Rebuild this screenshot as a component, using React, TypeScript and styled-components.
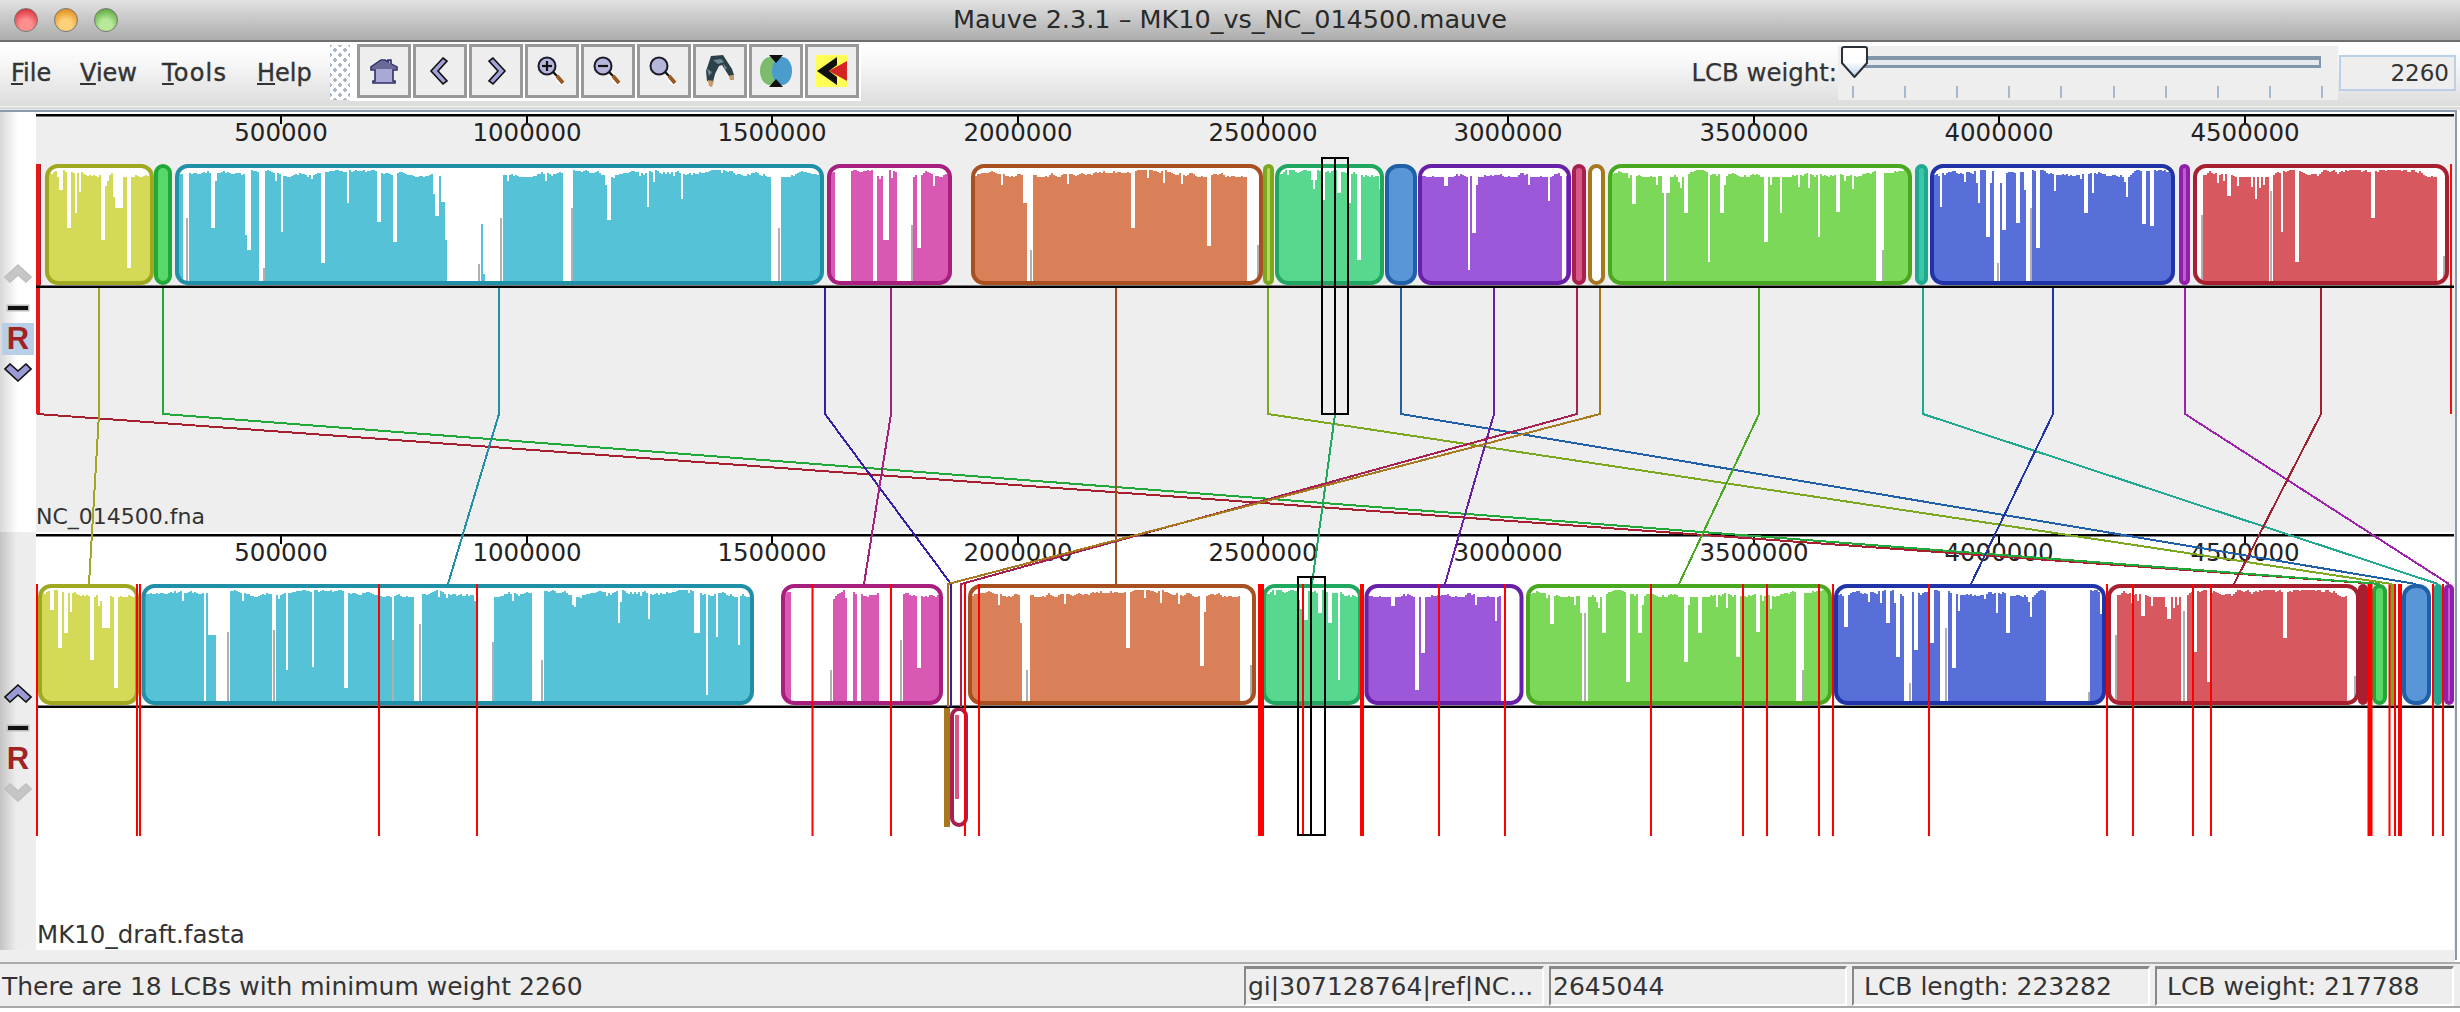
import React from "react";
import styled, { createGlobalStyle } from "styled-components";

const Global = createGlobalStyle`
  html, body { margin: 0; padding: 0; background: #fff; overflow: hidden; }
  body { font-family: "DejaVu Sans", sans-serif; }
`;

const UI = `"DejaVu Sans", "Liberation Sans", sans-serif`;

const Window = styled.div`
  width: 2460px; height: 1012px; display: flex; flex-direction: column; background: #fff; overflow: hidden;
`;
const TitleBar = styled.header`
  height: 40px; flex: none; display: flex; align-items: center; justify-content: center; position: relative;
  background: linear-gradient(#e2e2e2, #c9c9c9 45%, #adadad);
  border-bottom: 2px solid #6e6e6e;
`;
const Lights = styled.div`
  position: absolute; left: 14px; top: 8px; display: flex; gap: 16px;
`;
const Light = styled.span<{ $c: string; $d: string }>`
  width: 24px; height: 24px; border-radius: 50%; border: 1px solid #777; box-sizing: border-box;
  background: radial-gradient(circle at 50% 75%, ${(p) => p.$c} 30%, ${(p) => p.$d} 85%);
`;
const Title = styled.h1`
  margin: 0; font: 400 25.5px ${UI}; color: #2a2a2a; transform: translate(0, -1px);
`;
const Toolbar = styled.div`
  height: 64px; flex: none; display: flex; align-items: flex-start;
  background: linear-gradient(#fff, #f8f8f8 30%, #dcdcdc);
`;
const Menu = styled.nav`
  width: 330px; flex: none; height: 100%; display: flex; align-items: center; padding: 0 0 3px 11px; box-sizing: border-box;
`;
const MenuItem = styled.span<{ $w: number; $sp: number }>`
  width: ${(p) => p.$w}px; flex: none; font: 400 24px ${UI}; letter-spacing: ${(p) => p.$sp}px; color: #333; -webkit-text-stroke: 0.4px #333;
  &::first-letter { text-decoration: underline; }
`;
const Grip = styled.div`
  width: 20px; height: 55px; margin-top: 3px; flex: none;
  background-color: #fff;
  background-image: radial-gradient(circle, #aab6c6 1.6px, transparent 2px), radial-gradient(circle, #aab6c6 1.6px, transparent 2px);
  background-size: 10px 10px; background-position: 0 0, 5px 5px;
`;
const ButtonBar = styled.div`
  display: flex; gap: 2px; padding: 2px 2px 3px 7px; background: #fff;
`;
const ToolButton = styled.button`
  width: 54px; height: 54px; padding: 0; border: 3px solid #999; background: #eee; box-sizing: border-box;
  display: flex; align-items: center; justify-content: center;
`;
const WeightBox = styled.div`
  margin-left: auto; display: flex; align-items: flex-start; padding-right: 4px;
`;
const WeightLabel = styled.label`
  font: 400 24.4px ${UI}; color: #333; margin-top: 16px; margin-right: 1px; -webkit-text-stroke: 0.25px #333;
`;
const Slider = styled.div`
  width: 500px; height: 54px; margin-top: 4px; background: #eee; position: relative; flex: none;
`;
const Track = styled.div`
  position: absolute; left: 14px; top: 10px; width: 469px; height: 12px; box-sizing: border-box;
  border-top: 4px solid #8296aa; border-bottom: 3px solid #8296aa; border-right: 2px solid #8296aa; background: #e4e9ee;
`;
const Thumb = styled.svg`
  position: absolute; left: 2px; top: 0;
`;
const Ticks = styled.div`
  position: absolute; left: 14px; top: 40px; width: 471px; height: 12px; display: flex; justify-content: space-between;
`;
const Tick = styled.i`
  width: 2px; height: 12px; background: #a2b9d0;
`;
const WeightField = styled.div`
  width: 117px; height: 36px; margin-top: 13px; margin-left: 1px; box-sizing: border-box; border: 2px solid #b9d0e6;
  background: #eee; font: 400 23px ${UI}; color: #333; text-align: right; padding: 2px 5px 0 0; line-height: 28px;
`;
const ToolSep = styled.div`
  height: 4px; flex: none; background: linear-gradient(#fff, #d8d8d8 40%, #d8d8d8 70%, #eee);
`;
const Alignment = styled.main`
  flex: none; height: 850px; margin-right: 3px; position: relative; display: flex; flex-direction: column;
  border-top: 2px solid #8a9aaa; border-right: 2px solid #8a9aaa; border-bottom: 2px solid #7f8f9f; background: #eee; box-sizing: border-box;
`;
const GenomeRow = styled.section<{ $h: number }>`
  height: ${(p) => p.$h}px; flex: none; display: flex;
`;
const Gutter = styled.aside<{ $sel?: boolean }>`
  width: 36px; flex: none; position: relative;
  background: ${(p) => (p.$sel ? "linear-gradient(90deg,#c4c4c4,#ececec 45%,#eee)" : "linear-gradient(90deg,#d8d8d8,#fff 50%)")};
  display: flex; flex-direction: column; align-items: center; padding-top: 152px; box-sizing: border-box;
`;
const Minus = styled.i`
  width: 20px; height: 4px; background: #111; margin-top: 23px; box-shadow: 0 0 0 1.5px #bbb;
`;
const Reverse = styled.span<{ $on?: boolean }>`
  width: 32px; height: 32px; margin-top: 13px; display: flex; align-items: center; justify-content: center;
  font: 700 31px "Liberation Sans", sans-serif; color: #a02424; line-height: 32px;
  background: ${(p) => (p.$on ? "#b9cfe5" : "transparent")};
`;
const ArrowSlot = styled.div`
  flex: none; margin-top: 8px; height: 19px;
`;
const Chart = styled.svg<{ $bg: string }>`
  flex: none; display: block; background: ${(p) => p.$bg};
`;
const Overlay = styled.svg`
  position: absolute; left: 0; top: 0; pointer-events: none;
`;
const TickText = styled.text`
  font: 400 24.5px ${UI}; fill: #222; text-anchor: middle;
`;
const NameText = styled.text<{ $size: number }>`
  font: 400 ${(p) => p.$size}px ${UI}; fill: #333;
`;
const LowerBand = styled.div`
  height: 12px; flex: none; background: #eee;
`;
const StatusBar = styled.footer`
  flex: none; height: 46px; box-sizing: border-box; margin-top: 2px; border-top: 2px solid #aaa; border-bottom: 2px solid #aaa;
  background: #eee; display: flex; gap: 5px; padding: 2px 6px 0 2px;
`;
const StatusText = styled.div`
  flex: 1; font: 400 25px ${UI}; color: #333; line-height: 41px; white-space: nowrap;
`;
const StatusCell = styled.div<{ $w: number }>`
  width: ${(p) => p.$w}px; flex: none; box-sizing: border-box; border-top: 3px solid #888; border-left: 2px solid #888;
  border-right: 2px solid #fff; border-bottom: 2px solid #fff; font: 400 25px ${UI}; color: #333; line-height: 36px;
  padding-left: 2px; white-space: nowrap; overflow: hidden;
`;

const HouseIcon = () => (
  <svg width="32" height="32" viewBox="0 0 32 32">
    <path d="M3 12L13 5H17L20 7V5H23V9L29 12V15H25V26H27V28H5V26H7V15H3z" fill="#a9a9d6" stroke="#2f2f66" strokeWidth="1.6" />
    <path d="M4 12L13 6H17L28 12V14H4z" fill="#6a6a98" />
  </svg>
);
const LeftIcon = () => (
  <svg width="32" height="32" viewBox="0 0 32 32">
    <path d="M19 3l4 3-9 10 9 10-4 3L7 16z" fill="#a3a3dc" stroke="#111" strokeWidth="1.6" />
  </svg>
);
const RightIcon = () => (
  <svg width="32" height="32" viewBox="0 0 32 32">
    <path d="M13 3l-4 3 9 10-9 10 4 3 12-13z" fill="#a3a3dc" stroke="#111" strokeWidth="1.6" />
  </svg>
);
const LensIcon = ({ mark }: { mark?: "+" | "-" }) => (
  <svg width="32" height="32" viewBox="0 0 32 32">
    <path d="M18 19l9 10" stroke="#fff" strokeWidth="6" />
    <circle cx="11" cy="11" r="8.5" fill="#b6b6dc" stroke="#1a1a2a" strokeWidth="2" />
    <path d="M17 17l4 4" stroke="#111" strokeWidth="2.4" />
    <path d="M21 21l6 7" stroke="#9a5a22" strokeWidth="4" />
    {mark && <path d="M6 11h10" stroke="#111" strokeWidth="2.2" />}
    {mark === "+" && <path d="M11 6v10" stroke="#111" strokeWidth="2.2" />}
  </svg>
);
const BinocularIcon = () => (
  <svg width="34" height="34" viewBox="0 0 34 34">
    <path d="M8 2l12-1 9 14 2 6-5 1-7-11-3 1-4 8-2 8-6-1-1-10z" fill="#2c4048" />
    <path d="M10 6l8-1 3 3-6 2zM4 15l5 3-3 4zM20 9l4 5-2 2z" fill="#6f8a96" />
    <path d="M5 26l6 1-2 6-3-1zM26 22l5-1 0 5-4 0z" fill="#c59a6c" />
  </svg>
);
const ColorIcon = () => (
  <svg width="34" height="34" viewBox="0 0 34 34">
    <ellipse cx="11" cy="17" rx="10" ry="14" fill="#7cbc6c" />
    <ellipse cx="23" cy="17" rx="10" ry="14" fill="#4a9ccc" />
    <path d="M10 1h14l-7 8zM10 33h14l-7-8z" fill="#111" />
  </svg>
);
const ArrowsIcon = () => (
  <svg width="34" height="34" viewBox="0 0 34 34">
    <path d="M1 1h32v32H1z" fill="#ffff55" />
    <path d="M14 17L32 7v20z" fill="#d42424" />
    <path d="M2 17L22 3v8l-8 6 8 6v8z" fill="#111" />
  </svg>
);
const Chevron = ({ up, on }: { up: boolean; on: boolean }) => (
  <svg width="28" height="19" viewBox="0 0 28 19">
    <path
      d={up ? "M14 1L27 13l-5 5-8-7-8 7-5-5z" : "M14 18L27 6 22 1 14 8 6 1 1 6z"}
      fill={on ? "#9a9ad6" : "#c6c6c6"}
      stroke={on ? "#111" : "#c0c0c0"}
      strokeWidth="1.6"
    />
  </svg>
);

type Gap = [number, number, number, number?];
interface Block {
  id: string; fill: string; line: string; a: [number, number]; b: [number, number];
  solid?: boolean; gaps?: Gap[]; only1?: Gap[]; only2?: Gap[]; low?: boolean;
}

const BLOCKS: Block[] = [
  { id: "red0", fill: "#a82030", line: "#a82030", a: [36, 41], b: [2358, 2368], solid: true },
  { id: "yel", fill: "#d4d958", line: "#a0a820", a: [45, 154], b: [38, 139],
    gaps: [[60, 62, 190], [68, 70, 228], [75, 77, 213], [80, 81, 192], [102, 104, 240], [115, 122, 208], [128, 130, 268]] },
  { id: "grn", fill: "#58d868", line: "#20a838", a: [154, 172], b: [2372, 2387], solid: true },
  { id: "cya", fill: "#56c2d8", line: "#2090a8", a: [175, 824], b: [141.5, 754],
    only1: [[183, 188, 282, 218], [212, 214, 228], [245, 248, 235], [248, 250, 250], [260, 265, 282, 268], [281, 283, 232], [322, 325, 263], [347, 349, 203], [378, 380, 222], [393, 397, 242],
      [434, 436, 194], [436, 438, 216], [442, 444, 202], [446, 448, 240], [448, 480, 282, 264], [482, 484, 224], [484, 486, 274], [486, 502, 282, 218],
      [563, 573, 282, 208], [608, 610, 220], [647, 649, 207], [772, 780, 282, 228]],
    only2: [[204, 206, 282], [208, 217, 215], [217, 229, 282, 212], [272, 275, 282, 210], [286, 288, 250], [312, 314, 247], [345, 347, 268], [392, 394, 282, 220], [414, 421, 282, 204], [478, 494, 282, 222], [532, 543, 282, 240], [618, 620, 203], [694, 700, 213], [706, 708, 275], [716, 718, 217], [738, 740, 225]] },
  { id: "mag", fill: "#d858b4", line: "#a8207f", a: [827, 952], b: [781, 943],
    only1: [[835, 851, 282], [873, 876, 282], [884, 888, 240], [897, 913, 282, 225], [918, 920, 248]],
    only2: [[791, 832, 282, 250], [848, 853, 282], [858, 860, 282], [880, 902, 282, 220], [918, 920, 248]] },
  { id: "org", fill: "#d98058", line: "#a85020", a: [971, 1263], b: [968, 1256],
    gaps: [[1024, 1033, 203], [1027, 1032, 282, 250], [1132, 1134, 228], [1208, 1210, 246], [1248, 1259, 282, 245]] },
  { id: "oli", fill: "#b8d858", line: "#7ca820", a: [1263, 1274], b: [2390, 2394], solid: true },
  { id: "min", fill: "#58d88e", line: "#20a860", a: [1275, 1384], b: [1262, 1362],
    gaps: [[1322, 1324, 200], [1338, 1340, 193], [1349, 1351, 203], [1358, 1360, 260]] },
  { id: "blu", fill: "#5896d8", line: "#2060a8", a: [1385, 1417], b: [2402, 2431], solid: true },
  { id: "pur", fill: "#9c58d8", line: "#6820a8", a: [1418, 1571], b: [1364.5, 1523.5],
    gaps: [[1445, 1447, 186], [1468, 1470, 270], [1473, 1475, 233]], only2: [[1502, 1521, 282]], only1: [[1562, 1566, 282]] },
  { id: "cri", fill: "#d85888", line: "#a82050", a: [1572, 1586], b: [950, 968], low: true, solid: true },
  { id: "bro", fill: "#d8b058", line: "#a87820", a: [1588, 1605], b: [944, 950], low: true },
  { id: "lim", fill: "#7cd858", line: "#48a820", a: [1608, 1912], b: [1526, 1832],
    gaps: [[1633, 1635, 204], [1663, 1669, 193], [1665, 1668, 282, 193], [1685, 1687, 213], [1708, 1710, 262], [1721, 1723, 213], [1765, 1767, 242], [1780, 1782, 213], [1818, 1820, 237], [1837, 1839, 212], [1877, 1884, 282, 250]] },
  { id: "tea", fill: "#38c8a8", line: "#20a890", a: [1915, 1928], b: [2434, 2442], solid: true },
  { id: "ind", fill: "#586ed8", line: "#2034a8", a: [1930, 2175], b: [1834, 2106],
    gaps: [[1940, 1942, 207], [1978, 1980, 203], [1987, 1989, 237], [1994, 1999, 282, 263], [2003, 2005, 230], [2017, 2019, 223], [2027, 2032, 282, 208], [2037, 2039, 248], [2085, 2087, 213], [2143, 2145, 224], [2151, 2153, 226]],
    only2: [[2046, 2090, 282, 272]] },
  { id: "vio", fill: "#c458d8", line: "#9020a8", a: [2179, 2190], b: [2444, 2454], solid: true },
  { id: "rdd", fill: "#d85860", line: "#a82030", a: [2193, 2449], b: [2107, 2360],
    gaps: [[2198, 2203, 282, 215], [2228, 2230, 196], [2255, 2257, 199], [2269, 2272, 282, 191], [2281, 2283, 232], [2296, 2298, 262], [2372, 2374, 218], [2437, 2445, 282, 256]] },
];

function rng(seed: number) {
  let s = seed * 9301 + 49297;
  return () => {
    s = (s * 9301 + 49297) % 233280;
    return s / 233280;
  };
}

function histogram(b: Block, genome: 0 | 1): string {
  const [x0, x1] = genome === 0 ? b.a : b.b;
  const [a0, a1] = b.a;
  const dy = genome === 0 ? 0 : 420;
  const r = rng(b.id.charCodeAt(0) * 7 + b.id.charCodeAt(2) * 13);
  const left = Math.ceil(x0);
  const right = Math.floor(x1);
  const tops: number[] = [];
  const map = (x: number) => x0 + ((x - a0) / (a1 - a0)) * (x1 - x0);
  const gaps: [number, number, number][] = [];
  for (const g of b.gaps || []) gaps.push([map(g[0]), map(g[1]), g[2]]);
  for (const g of (genome === 0 ? b.only1 : b.only2) || []) gaps.push([g[0], g[1], g[2]]);
  let level = 173;
  for (let x = left; x < right; x += 2) {
    level = Math.max(170, Math.min(177, level + (r() - 0.5) * 4));
    let t = Math.round(level);
    const spike = r();
    if (spike > 0.985) t += Math.round(r() * 28);
    else if (spike > 0.93) t += Math.round(r() * 12);
    for (const g of gaps) if (x + 2 > g[0] && x < g[1]) t = Math.max(t, g[2]);
    tops.push(t);
  }
  let d = `M${left} ${283 + dy}`;
  tops.forEach((t, i) => {
    d += `V${t + dy}H${left + (i + 1) * 2}`;
  });
  return d + `V${283 + dy}Z`;
}

function grayStrips(b: Block, genome: 0 | 1) {
  const [x0, x1] = genome === 0 ? b.a : b.b;
  const [a0, a1] = b.a;
  const dy = genome === 0 ? 0 : 420;
  const out: React.ReactElement[] = [];
  const map = (x: number) => x0 + ((x - a0) / (a1 - a0)) * (x1 - x0);
  (b.gaps || []).forEach((g, i) => {
    if (g[3]) out.push(<rect key={`c${i}`} x={Math.round(map(g[1])) - 2} y={g[3] + dy} width={2} height={283 - g[3]} fill="#b0b0b0" />);
  });
  ((genome === 0 ? b.only1 : b.only2) || []).forEach((g, i) => {
    if (g[3]) out.push(<rect key={`o${i}`} x={g[1] - 2} y={g[3] + dy} width={2} height={283 - g[3]} fill="#b0b0b0" />);
  });
  return out;
}

const BlockShape = ({ b, genome }: { b: Block; genome: 0 | 1 }) => {
  const [x0, x1] = genome === 0 ? b.a : b.b;
  const low = genome === 1 && b.low;
  const top = genome === 0 ? 164 : low ? 707 : 584;
  const h = low ? 120 : 121;
  const w = x1 - x0;
  const rx = Math.min(11, Math.max(0, w / 2 - 2));
  const id = `clip-${b.id}-${genome}`;
  if (w < 8) return <rect x={x0} y={top} width={w} height={h} fill={b.line} />;
  if (b.solid || (genome === 0 && b.id === "bro")) {
    const filled = b.id !== "bro" && !(low && b.id === "cri");
    return (
      <g>
        <rect x={x0 + 2} y={top + 2} width={w - 4} height={h - 4} rx={rx} fill={filled ? b.fill : "#fff"} stroke={b.line} strokeWidth="4" />
        {low && <rect x={x0 + 5} y={top + 8} width={4} height={84} fill={b.fill} />}
      </g>
    );
  }
  return (
    <g>
      <clipPath id={id}>
        <rect x={x0 + 2} y={top + 2} width={w - 4} height={h - 4} rx={rx} />
      </clipPath>
      <rect x={x0 + 2} y={top + 2} width={w - 4} height={h - 4} rx={rx} fill="#fff" />
      <g clipPath={`url(#${id})`} shapeRendering="crispEdges">
        <path d={histogram(b, genome)} fill={b.fill} />
        {grayStrips(b, genome)}
      </g>
      <rect x={x0 + 2} y={top + 2} width={w - 4} height={h - 4} rx={rx} fill="none" stroke={b.line} strokeWidth="4" />
    </g>
  );
};

const TICKS = [1, 2, 3, 4, 5, 6, 7, 8, 9].map((n) => ({ x: Math.round(35.9 + 245.4 * n), label: String(n * 500000) }));

const Ruler = ({ y }: { y: number }) => (
  <g>
    <rect x="36" y={y} width="2418" height="2.5" fill="#000" />
    {TICKS.map((t) => (
      <g key={t.label}>
        <rect x={t.x - 1} y={y} width="2" height="10" fill="#000" />
        <TickText x={t.x} y={y + 27}>{t.label}</TickText>
      </g>
    ))}
  </g>
);

const REDS: [number, number][] = [
  [37, 2], [137, 2], [140, 2], [379, 2], [477, 2], [812.5, 2], [891, 2], [965, 2], [979, 2],
  [1261, 6], [1303, 2], [1362, 4], [1439, 2], [1505, 2], [1651, 2], [1743, 2],
  [1767, 2], [1819, 2], [1833, 2], [1929, 2], [2107, 2], [2133, 2], [2193, 2], [2211, 2],
  [2370, 5], [2389.5, 2], [2395, 2], [2400, 4], [2433, 2], [2443, 2], [2455, 2],
];

const LINKS: [string, string][] = [
  ["#a82030", "M37 414L2365 583"],
  ["#a0a820", "M99 288V414L89 584"],
  ["#20a838", "M163 288V414L2380 584"],
  ["#2090a8", "M499 288V414L448 584"],
  ["#3a1aa8", "M825 288V414L951 584V707"],
  ["#a8207f", "M891 288V414L864 584"],
  ["#a05020", "M1116 288V584"],
  ["#7ca820", "M1268 288V414L2392 584"],
  ["#20a860", "M1335 288V414L1312 584"],
  ["#2060a8", "M1401 288V414L2416 584"],
  ["#6820a8", "M1494 288V414L1445 584"],
  ["#a82050", "M1577 288V414L961 584V707"],
  ["#a87820", "M1600 288V414L948 584V707"],
  ["#48a820", "M1759 288V414L1679 584"],
  ["#20a890", "M1923 288V414L2438 584"],
  ["#2034a8", "M2053 288V414L1971 584"],
  ["#a020b0", "M2185 288V414L2449 584"],
  ["#a02030", "M2321 288V414L2234 584"],
];

const MENUS: [string, number, number][] = [["File", 69, 0], ["View", 82, 0], ["Tools", 95, 1.2], ["Help", 60, 0]];

export default function App() {
  return (
    <Window>
      <Global />
      <TitleBar>
        <Lights>
          <Light $c="#ff8f8f" $d="#d8303a" />
          <Light $c="#ffd27a" $d="#dc8c1c" />
          <Light $c="#b8e89a" $d="#5aa83c" />
        </Lights>
        <Title>Mauve 2.3.1 – MK10_vs_NC_014500.mauve</Title>
      </TitleBar>
      <Toolbar>
        <Menu>
          {MENUS.map(([m, w, sp]) => (
            <MenuItem key={m} $w={w} $sp={sp}>{m}</MenuItem>
          ))}
        </Menu>
        <Grip />
        <ButtonBar>
          <ToolButton><HouseIcon /></ToolButton>
          <ToolButton><LeftIcon /></ToolButton>
          <ToolButton><RightIcon /></ToolButton>
          <ToolButton><LensIcon mark="+" /></ToolButton>
          <ToolButton><LensIcon mark="-" /></ToolButton>
          <ToolButton><LensIcon /></ToolButton>
          <ToolButton><BinocularIcon /></ToolButton>
          <ToolButton><ColorIcon /></ToolButton>
          <ToolButton><ArrowsIcon /></ToolButton>
        </ButtonBar>
        <WeightBox>
          <WeightLabel>LCB weight:</WeightLabel>
          <Slider>
            <Track />
            <Thumb width="30" height="32" viewBox="0 0 30 32">
              <defs>
                <linearGradient id="thumbFill" x1="0" x2="0" y1="0" y2="1">
                  <stop offset="0" stopColor="#fff" />
                  <stop offset="0.5" stopColor="#fff" />
                  <stop offset="1" stopColor="#b8d2ec" />
                </linearGradient>
              </defs>
              <path d="M2 3Q2 1 4 1H25Q27 1 27 3V17L14.5 31L2 17Z" fill="url(#thumbFill)" stroke="#2a3038" strokeWidth="2" />
            </Thumb>
            <Ticks>
              {Array.from({ length: 10 }, (_, i) => <Tick key={i} />)}
            </Ticks>
          </Slider>
          <WeightField>2260</WeightField>
        </WeightBox>
      </Toolbar>
      <ToolSep />
      <Alignment>
        <GenomeRow $h={420}>
          <Gutter>
            <Chevron up on={false} />
            <Minus />
            <Reverse $on>R</Reverse>
            <ArrowSlot><Chevron up={false} on /></ArrowSlot>
          </Gutter>
          <Chart $bg="#eee" width="2418" height="420" viewBox="36 112 2418 420">
            <rect x="36" y="112" width="2418" height="2" fill="#fff" />
            <Ruler y={114} />
            {BLOCKS.map((b) => <BlockShape key={b.id} b={b} genome={0} />)}
            <rect x="36" y="164" width="4" height="250" fill="#e81818" />
            <rect x="2450" y="164" width="2" height="250" fill="#f01010" />
            <rect x="36" y="285.5" width="2418" height="2.5" fill="#000" />
            <NameText $size={22} x="36" y="524">NC_014500.fna</NameText>
          </Chart>
        </GenomeRow>
        <GenomeRow $h={418}>
          <Gutter $sel>
            <Chevron up on />
            <Minus />
            <Reverse>R</Reverse>
            <ArrowSlot><Chevron up={false} on={false} /></ArrowSlot>
          </Gutter>
          <Chart $bg="#fff" width="2418" height="418" viewBox="36 532 2418 418">
            <Ruler y={534} />
            {BLOCKS.map((b) => <BlockShape key={b.id} b={b} genome={1} />)}
            <rect x="36" y="705.5" width="2418" height="2.5" fill="#000" />
            {REDS.map(([x, w]) => <rect key={x} x={x - w / 2} y="584" width={w} height="252" fill="#f00" />)}
            <NameText $size={24.5} x="37" y="943">MK10_draft.fasta</NameText>
          </Chart>
        </GenomeRow>
        <LowerBand />
        <Overlay width="2455" height="846" viewBox="0 112 2455 846">
          <g fill="none" strokeWidth="2" shapeRendering="crispEdges">
            {LINKS.map(([c, d]) => <path key={d} d={d} stroke={c} />)}
          </g>
          <g fill="none" stroke="#000" strokeWidth="2">
            <rect x="1322" y="158" width="26" height="256" />
            <path d="M1335 158V414" />
            <rect x="1298" y="577" width="27" height="258" />
            <path d="M1311 577V835" />
          </g>
        </Overlay>
      </Alignment>
      <StatusBar>
        <StatusText>There are 18 LCBs with minimum weight 2260</StatusText>
        <StatusCell $w={300}>gi|307128764|ref|NC...</StatusCell>
        <StatusCell $w={298}>2645044</StatusCell>
        <StatusCell $w={298}>&nbsp;LCB length: 223282</StatusCell>
        <StatusCell $w={299}>&nbsp;LCB weight: 217788</StatusCell>
      </StatusBar>
    </Window>
  );
}
